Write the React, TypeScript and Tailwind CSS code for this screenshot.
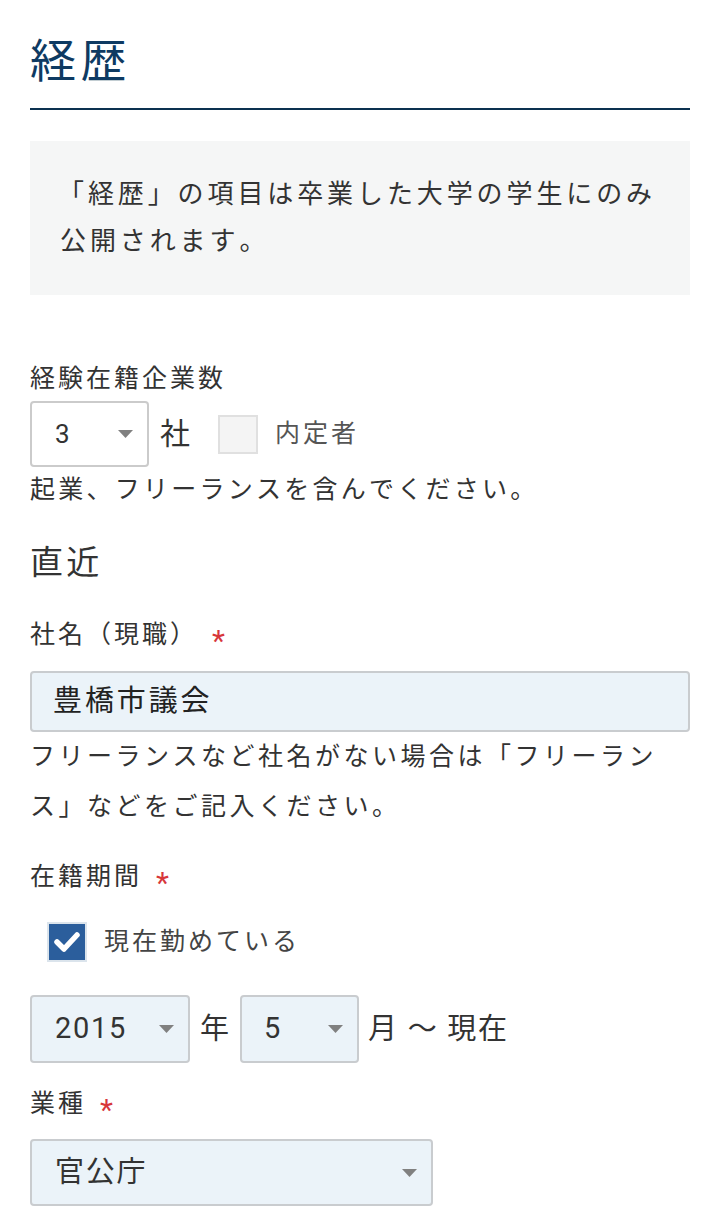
import React from "react";

const FONT = { fontFamily: 'Roboto, "Noto Sans CJK JP", sans-serif', fontKerning: "none" as const };

function Caret() {
  return (
    <svg width="15" height="8" viewBox="0 0 15 8" className="shrink-0">
      <polygon points="0,0 15,0 7.5,8" fill="#808080" />
    </svg>
  );
}

function Required() {
  return <span className="ml-[14px] inline-block translate-y-[6px] text-[30px] leading-none text-[#d7373a]">*</span>;
}

function Label({ children, required }: { children: React.ReactNode; required?: boolean }) {
  return (
    <div className="flex items-center text-[25px] leading-[36px] tracking-[0.12em] text-[#333]">
      <span>{children}</span>
      {required && <Required />}
    </div>
  );
}

function BlueSelect({ value, className, pl = "pl-[23px]" }: { value: string; className: string; pl?: string }) {
  return (
    <div
      className={`flex items-center justify-between rounded-[4px] border-2 border-[#c9cccf] bg-[#ebf3f9] pr-[14px] text-[29px] tracking-[0.06em] text-[#333] ${pl} ${className}`}
    >
      <span>{value}</span>
      <Caret />
    </div>
  );
}

export default function App() {
  return (
    <div className="min-h-[1230px] w-[720px] bg-white px-[30px] pb-10" style={FONT}>
      {/* heading */}
      <div className="border-b-2 border-[#0c3150] pb-[17px] pt-[31px]">
        <h1 className="text-[46px] leading-[60px] tracking-[0.1em] text-[#0e3a62]">経歴</h1>
      </div>

      <div className="mt-[31px] bg-[#f5f6f6] px-[28px] py-[30px] text-[26px] leading-[47px] text-[#333]">
        <p className="whitespace-nowrap tracking-[0.15em]">「経歴」の項目は卒業した大学の学生にのみ</p>
        <p className="whitespace-nowrap pl-[2px] tracking-[0.15em]">公開されます。</p>
      </div>

      <div className="mt-[66px]">
        <Label>経験在籍企業数</Label>
        <div className="mt-[4px] flex items-center">
          <div className="flex h-[66px] w-[119px] items-center justify-between rounded-[4px] border-2 border-[#cbcbcb] bg-white pl-[23px] pr-[14px] text-[26px] text-[#333]">
            <span>3</span>
            <Caret />
          </div>
          <span className="ml-[11px] text-[30px] leading-none text-[#333]">社</span>
          <span className="ml-[28px] h-[39px] w-[40px] border-2 border-[#e0e0e0] bg-[#f4f4f4]" />
          <span className="ml-[17px] text-[25px] tracking-[0.12em] text-[#555]">内定者</span>
        </div>
        <p className="mt-[5px] text-[25px] leading-[36px] tracking-[0.13em] text-[#333]">起業、フリーランスを含んでください。</p>
      </div>

      <h2 className="mt-[33px] text-[33px] leading-[44px] tracking-[0.1em] text-[#333]">直近</h2>

      <div className="mt-[32px]">
        <Label required>社名（現職）</Label>
        <div className="mt-[18px] flex h-[61px] items-center rounded-[4px] border-2 border-[#c9cccf] bg-[#ebf3f9] pl-[21px] text-[29px] tracking-[0.1em] text-[#222]">
          豊橋市議会
        </div>
        <p className="whitespace-nowrap text-[25px] leading-[50px] tracking-[0.14em] text-[#333]">
          フリーランスなど社名がない場合は「フリーラン
          <br />
          ス」などをご記入ください。
        </p>
      </div>

      <div className="mt-[27px]">
        <Label required>在籍期間</Label>
        <div className="ml-[17px] mt-[27px] flex items-center">
          <span className="flex h-[40px] w-[40px] items-center justify-center border-2 border-[#dbe4ec] bg-[#2b5e9c]">
            <svg width="30" height="30" viewBox="0 0 30 30">
              <polyline points="5,15 12,22 25,8" fill="none" stroke="#fff" strokeWidth="5.5" strokeLinecap="round" strokeLinejoin="round" />
            </svg>
          </span>
          <span className="ml-[17px] text-[25px] tracking-[0.12em] text-[#444]">現在勤めている</span>
        </div>
        <div className="mt-[33px] flex items-center">
          <BlueSelect value="2015" className="h-[68px] w-[160px]" />
          <span className="ml-[10px] text-[29px] leading-none text-[#333]">年</span>
          <BlueSelect value="5" className="ml-[11px] h-[68px] w-[119px]" pl="pl-[22px]" />
          <span className="ml-[9px] text-[29px] leading-none tracking-[0.06em] text-[#333]">月 〜 現在</span>
        </div>
      </div>

      <div className="mt-[23px]">
        <Label required>業種</Label>
        <BlueSelect value="官公庁" className="mt-[17px] h-[67px] w-[403px]" />
      </div>
    </div>
  );
}
